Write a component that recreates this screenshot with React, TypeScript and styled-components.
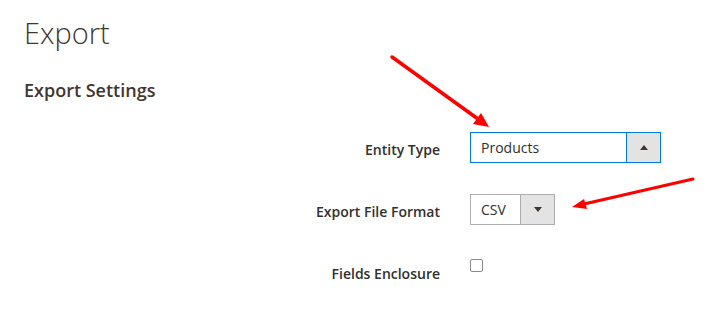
import React from "react";
import styled, { createGlobalStyle } from "styled-components";

const Global = createGlobalStyle`
  html, body { margin: 0; padding: 0; background: #fff; }
  body { font-family: "Open Sans", "Liberation Sans", sans-serif; color: #303030; }
`;

const Page = styled.div`
  position: relative;
  width: 724px;
  height: 310px;
  overflow: hidden;
  padding: 0 0 0 24px;
  box-sizing: border-box;
`;

const Title = styled.h1`
  margin: 0;
  padding-top: 13px;
  font-size: 29px;
  line-height: 40px;
  font-weight: 300;
  color: #41362f;
`;

const Legend = styled.h2`
  margin: 25px 0 0;
  font-size: 18px;
  line-height: 24px;
  font-weight: 600;
  color: #41362f;
`;

const Form = styled.div`
  display: grid;
  grid-template-columns: 416px auto;
  grid-auto-rows: 31px;
  column-gap: 30px;
  row-gap: 31px;
  margin-top: 30px;
  align-items: start;
`;

const Label = styled.label<{ $offset?: number }>`
  justify-self: end;
  box-sizing: border-box;
  height: 31px;
  font-size: 14px;
  font-weight: 600;
  line-height: ${(p) => 31 - (p.$offset ?? 4)}px;
  color: #303030;
  padding-top: ${(p) => p.$offset ?? 4}px;
`;

const Select = styled.div<{ $width: number; $focused?: boolean }>`
  display: flex;
  width: ${(p) => p.$width}px;
  height: 31px;
  box-sizing: border-box;
  border: 1px solid ${(p) => (p.$focused ? "#007bdb" : "#adadad")};
  background: #fff;
`;

const SelectValue = styled.div`
  flex: 1;
  padding-left: 10px;
  font-size: 14px;
  line-height: 29px;
  color: #303030;
`;

const SelectButton = styled.div<{ $focused?: boolean }>`
  width: 33px;
  display: flex;
  align-items: center;
  justify-content: center;
  background: #e3e3e3;
  border-left: 1px solid ${(p) => (p.$focused ? "#007bdb" : "#adadad")};
`;

const Triangle = styled.span<{ $up?: boolean }>`
  width: 0;
  height: 0;
  border-left: 4.5px solid transparent;
  border-right: 4.5px solid transparent;
  ${(p) =>
    p.$up
      ? "border-bottom: 5px solid #41362f;"
      : "border-top: 5px solid #41362f;"}
`;

const Checkbox = styled.span`
  display: block;
  width: 13px;
  height: 13px;
  margin-top: 3px;
  box-sizing: border-box;
  border: 1px solid #8a8a8a;
  border-radius: 2px;
  background: #fff;
`;

const Arrows = styled.svg`
  position: absolute;
  left: 0;
  top: 0;
  pointer-events: none;
`;

export default function App() {
  return (
    <Page>
      <Global />
      <Title>Export</Title>
      <Legend>Export Settings</Legend>
      <Form>
        <Label>Entity Type</Label>
        <Select $width={191} $focused>
          <SelectValue>Products</SelectValue>
          <SelectButton $focused>
            <Triangle $up />
          </SelectButton>
        </Select>
        <Label>Export File Format</Label>
        <Select $width={85}>
          <SelectValue>CSV</SelectValue>
          <SelectButton>
            <Triangle />
          </SelectButton>
        </Select>
        <Label $offset={5}>Fields Enclosure</Label>
        <Checkbox />
      </Form>
      <Arrows width={724} height={310} viewBox="0 0 724 310">
        <line x1="392" y1="57" x2="478" y2="119" stroke="#ff0000" strokeWidth="3.5" strokeLinecap="round" />
        <polygon points="489,127 473,124 481,113" fill="#ff0000" />
        <line x1="693" y1="179" x2="584" y2="204" stroke="#ff0000" strokeWidth="3" strokeLinecap="round" />
        <polygon points="572,207 584,199 587,209" fill="#ff0000" />
      </Arrows>
    </Page>
  );
}
